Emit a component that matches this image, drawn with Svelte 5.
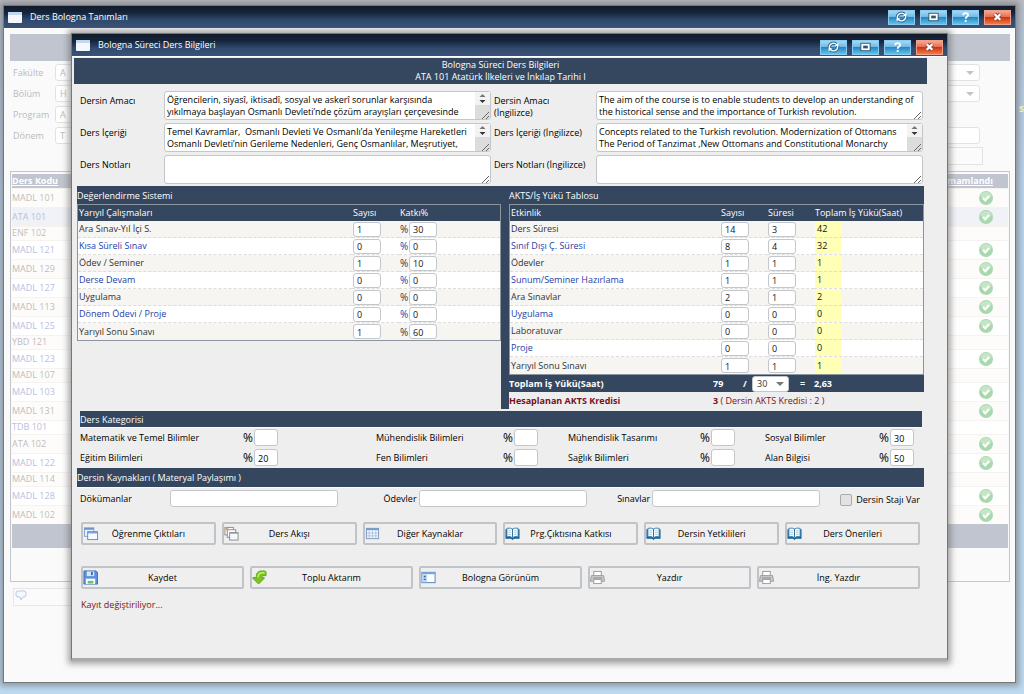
<script lang="ts">
	type Work = { name: string; count: number; duration: number };

	const windowTools = ['refresh', 'maximize', 'help', 'close'];

	const courses = [
		{ code: 'MADL 101', done: true },
		{ code: 'ATA 101', done: true },
		{ code: 'ENF 102', done: false },
		{ code: 'MADL 121', done: true },
		{ code: 'MADL 129', done: true },
		{ code: 'MADL 127', done: true },
		{ code: 'MADL 113', done: true },
		{ code: 'MADL 125', done: true },
		{ code: 'YBD 121', done: false },
		{ code: 'MADL 123', done: true },
		{ code: 'MADL 107', done: false },
		{ code: 'MADL 103', done: true },
		{ code: 'MADL 131', done: true },
		{ code: 'TDB 101', done: false },
		{ code: 'ATA 102', done: true },
		{ code: 'MADL 122', done: true },
		{ code: 'MADL 114', done: false },
		{ code: 'MADL 128', done: true },
		{ code: 'MADL 102', done: true }
	];

	const filters = [
		{ id: 'fakulte', label: 'Fakülte', value: 'A' },
		{ id: 'bolum', label: 'Bölüm', value: 'H' },
		{ id: 'program', label: 'Program', value: 'A' },
		{ id: 'donem', label: 'Dönem', value: 'T' }
	];

	let texts = $state([
		{
			id: 'amac',
			label: 'Dersin Amacı',
			scroll: true,
			value:
				'Öğrencilerin, siyasî, iktisadî, sosyal ve askerî sorunlar karşısında\nyıkılmaya başlayan Osmanlı Devleti’nde çözüm arayışları çerçevesinde'
		},
		{
			id: 'amac-en',
			label: 'Dersin Amacı\n(İngilizce)',
			scroll: false,
			value:
				'The aim of the course is to enable students to develop an understanding of\nthe historical sense and the importance of Turkish revolution.'
		},
		{
			id: 'icerik',
			label: 'Ders İçeriği',
			scroll: true,
			value:
				'Temel Kavramlar,  Osmanlı Devleti Ve Osmanlı’da Yenileşme Hareketleri\nOsmanlı Devleti’nin Gerileme Nedenleri, Genç Osmanlılar, Meşrutiyet,'
		},
		{
			id: 'icerik-en',
			label: 'Ders İçeriği (İngilizce)',
			scroll: true,
			value:
				'Concepts related to the Turkish revolution. Modernization of Ottomans\nThe Period of Tanzimat ,New Ottomans and Constitutional Monarchy'
		},
		{ id: 'notlar', label: 'Ders Notları', scroll: false, value: '' },
		{ id: 'notlar-en', label: 'Ders Notları (İngilizce)', scroll: false, value: '' }
	]);

	let grading = $state([
		{ name: 'Ara Sınav-Yıl İçi S.', count: 1, share: 30 },
		{ name: 'Kısa Süreli Sınav', count: 0, share: 0 },
		{ name: 'Ödev / Seminer', count: 1, share: 10 },
		{ name: 'Derse Devam', count: 0, share: 0 },
		{ name: 'Uygulama', count: 0, share: 0 },
		{ name: 'Dönem Ödevi / Proje', count: 0, share: 0 },
		{ name: 'Yarıyıl Sonu Sınavı', count: 1, share: 60 }
	]);

	let workload: Work[] = $state([
		{ name: 'Ders Süresi', count: 14, duration: 3 },
		{ name: 'Sınıf Dışı Ç. Süresi', count: 8, duration: 4 },
		{ name: 'Ödevler', count: 1, duration: 1 },
		{ name: 'Sunum/Seminer Hazırlama', count: 1, duration: 1 },
		{ name: 'Ara Sınavlar', count: 2, duration: 1 },
		{ name: 'Uygulama', count: 0, duration: 0 },
		{ name: 'Laboratuvar', count: 0, duration: 0 },
		{ name: 'Proje', count: 0, duration: 0 },
		{ name: 'Yarıyıl Sonu Sınavı', count: 1, duration: 1 }
	]);

	let hoursPerCredit = $state('30');
	const total = $derived(workload.reduce((sum, w) => sum + w.count * w.duration, 0));
	const ratio = $derived(total / Number(hoursPerCredit));

	let categories = $state([
		{ id: 'matematik', label: 'Matematik ve Temel Bilimler', value: '' },
		{ id: 'muhendislik', label: 'Mühendislik Bilimleri', value: '' },
		{ id: 'tasarim', label: 'Mühendislik Tasarımı', value: '' },
		{ id: 'sosyal', label: 'Sosyal Bilimler', value: '30' },
		{ id: 'egitim', label: 'Eğitim Bilimleri', value: '20' },
		{ id: 'fen', label: 'Fen Bilimleri', value: '' },
		{ id: 'saglik', label: 'Sağlık Bilimleri', value: '' },
		{ id: 'alan', label: 'Alan Bilgisi', value: '50' }
	]);

	const pages = [
		{ label: 'Öğrenme Çıktıları', icon: 'windows' },
		{ label: 'Ders Akışı', icon: 'cascade' },
		{ label: 'Diğer Kaynaklar', icon: 'grid' },
		{ label: 'Prg.Çıktısına Katkısı', icon: 'book' },
		{ label: 'Dersin Yetkilileri', icon: 'book' },
		{ label: 'Ders Önerileri', icon: 'book' }
	];

	const actions = [
		{ label: 'Kaydet', icon: 'save' },
		{ label: 'Toplu Aktarım', icon: 'transfer' },
		{ label: 'Bologna Görünüm', icon: 'view' },
		{ label: 'Yazdır', icon: 'print' },
		{ label: 'İng. Yazdır', icon: 'print' }
	];
</script>

{#snippet titlebar(title: string)}
	<header class="titlebar">
		<svg class="app-icon" viewBox="0 0 14 11" aria-hidden="true">
			<rect width="14" height="11" rx="1" fill="#f4f8fe" />
			<rect width="14" height="3" rx="1" fill="#c3d8f0" />
		</svg>
		<h1>{title}</h1>
		<div class="tools">
			{#each windowTools as tool}
				<button type="button" class="tool" class:close={tool === 'close'} aria-label={tool}>
					<svg viewBox="0 0 14 13" fill="none" stroke="#fff" stroke-width="2" aria-hidden="true">
						{#if tool === 'refresh'}
							<path d="M2.500 8V6.500a4.500 4.500 0 0 1 8-2.500M11.500 5v1.500a4.500 4.500 0 0 1-8 2.500" stroke="#31668c" stroke-width="3.600" />
							<path d="M2.500 8V6.500a4.500 4.500 0 0 1 8-2.500M11.500 5v1.500a4.500 4.500 0 0 1-8 2.500" stroke-width="1.500" />
							<path d="M12.300 1.500v4H8.500zM1.700 11.500v-4h3.800z" fill="#fff" stroke="none" />
						{:else if tool === 'maximize'}
							<rect x="3.500" y="4" width="7" height="5" stroke="#31566f" stroke-width="4" />
							<rect x="3.500" y="4" width="7" height="5" fill="#31566f" />
						{:else if tool === 'help'}
							<path d="M4.500 4.500C4.500 1.500 9.800 1.500 9.800 4.300c0 2-2.600 1.800-2.600 4M7.200 9.800v2" />
						{:else}
							<path d="M4 3.500l6 6M10 3.500l-6 6" stroke="#8c4434" stroke-width="4.500" />
							<path d="M4 3.500l6 6M10 3.500l-6 6" stroke-width="2.500" />
						{/if}
					</svg>
				</button>
			{/each}
		</div>
	</header>
{/snippet}

{#snippet icon(name: string)}
	<svg class="icon" viewBox="0 0 16 16" aria-hidden="true">
		{#if name === 'windows'}
			<rect x="1.500" y="2" width="10" height="9" fill="#e8f1fd" stroke="#7f9fd0" />
			<path d="M1.500 3h10" stroke="#6b93d0" stroke-width="2" />
			<rect x="5" y="6" width="10.500" height="8.500" fill="#f7fbff" stroke="#6688c0" />
			<path d="M5 7h10.500" stroke="#79a4e0" stroke-width="2" />
		{:else if name === 'cascade'}
			<rect x="1" y="1.500" width="9" height="8" fill="#fff" stroke="#888" />
			<rect x="3.500" y="4" width="9" height="8" fill="#fff" stroke="#888" />
			<rect x="6" y="7" width="9" height="8" fill="#f4f8ff" stroke="#888" />
			<path d="M6 8h9" stroke="#9bb5d8" />
			<path d="M1 1l4 1-3 3z" fill="#d0a060" />
		{:else if name === 'grid'}
			<rect x="1.500" y="2.500" width="13" height="11" fill="#f4f9ff" stroke="#7897bd" />
			<path d="M2 3.500h12" stroke="#6e9bd0" stroke-width="2" />
			<path d="M4.500 5v8M8 5v8M11.500 5v8M2 7.500h12M2 10.500h12" stroke="#adc3dd" />
		{:else if name === 'book'}
			<path d="M.5 3.500h15v10H9.500L8 14.800 6.500 13.500h-6z" fill="#155d92" />
			<path d="M2 2.500q4-1 6 .8 2-1.800 6-.8v9q-4-.8-6 1-2-1.800-6-1z" fill="#f5fbff" stroke="#3b7eae" />
			<path d="M8 3v9" stroke="#286996" />
			<path d="M3.500 5h3M3.500 7h3M3.500 9h3M9.500 5h3M9.500 7h3M9.500 9h3" stroke="#b4cddd" />
		{:else if name === 'save'}
			<path d="M1 1h13l1.500 1.500V15H1z" fill="#5b90dc" stroke="#3f69b5" />
			<rect x="4" y="1.500" width="8" height="5" fill="#d8e8fb" />
			<rect x="8.500" y="2" width="2" height="3.500" fill="#3f6db9" />
			<rect x="3" y="8.500" width="10" height="6.500" fill="#fff" />
			<path d="M3 9h10" stroke="#82a9df" />
			<path d="M5 13h6" stroke="#6bc46c" stroke-width="3" />
		{:else if name === 'transfer'}
			<path d="M4.500 7q0-5.500 5-6h4.500l1 1v4h-3.500q-1 0-1 2H13v1L7 15 1 9V8h3.500z" fill="#79c51e" stroke="#65a822" />
			<path d="M6.500 8q0-5 5-5h2" fill="none" stroke="#baf36a" stroke-width="1.500" />
		{:else if name === 'view'}
			<rect x="1" y="2.500" width="14" height="11" fill="#fff" stroke="#4e7eb9" />
			<path d="M1 3.500h14" stroke="#78a8e0" stroke-width="2" />
			<rect x="1.500" y="4.500" width="5" height="8.500" fill="#bdd8f5" />
			<path d="M3 7h2M3 10h2" stroke="#2d66ac" stroke-width="1.500" />
		{:else}
			<rect x="4" y="1.500" width="8" height="5" fill="#fff" stroke="#999" />
			<path d="M1.500 6h13l1 6H.5z" fill="#ccc" stroke="#999" />
			<rect x="4" y="10" width="8" height="4.500" fill="#fff" stroke="#999" />
			<path d="M3 8.500h10" stroke="#888" />
		{/if}
	</svg>
{/snippet}

<div class="desktop">
	<span class="behind">S</span>
	<section class="window">
		{@render titlebar('Ders Bologna Tanımları')}
		<div class="list-body">
			<div class="faded-band"></div>
			<div class="filters">
				{#each filters as f}
					<label for={f.id}>{f.label}</label>
					<div class="filter-box" class:drop={f.id === 'fakulte' || f.id === 'bolum'} class:short={f.id === 'program'}>
						<input id={f.id} value={f.value} />
					</div>
				{/each}
			</div>
			<div class="search-row"><button type="button" aria-label="Ara"></button></div>
			<div class="list-frame">
				<table class="courses">
					<thead>
						<tr><th><a href="#kod">Ders Kodu</a></th><th><a href="#tamam">Tamamlandı</a></th></tr>
					</thead>
					<tbody>
						{#each courses as course}
							<tr class:done={course.done} class:selected={course.code === 'ATA 101'}>
								<td>{course.code}</td>
								<td>
									{#if course.done}
										<svg class="check" viewBox="0 0 14 14" aria-hidden="true">
											<circle cx="7" cy="7" r="7" fill="#a9d8ae" />
											<ellipse cx="7" cy="4.500" rx="5.500" ry="3.500" fill="#c4e6c7" />
											<path d="M4 7l2.300 2.500L10 5" fill="none" stroke="#fff" stroke-width="2" />
										</svg>
									{/if}
								</td>
							</tr>
						{/each}
					</tbody>
				</table>
				<div class="list-foot"></div>
			</div>
			<button type="button" class="note" aria-label="Not">
				<svg viewBox="0 0 12 11" fill="#f5f9fd" stroke="#b7cbe3" aria-hidden="true">
					<path d="M3 1h6q2 0 2 2v2q0 2-2 2H8l-2 3-1-3H3Q1 7 1 5V3q0-2 2-2z" />
				</svg>
			</button>
		</div>
	</section>

	<section class="window dialog">
		{@render titlebar('Bologna Süreci Ders Bilgileri')}
		<form class="dialog-body" onsubmit={(e) => e.preventDefault()}>
			<h2 class="course-title">
				Bologna Süreci Ders Bilgileri<br />ATA 101 Atatürk İlkeleri ve İnkılap Tarihi I
			</h2>

			<div class="texts">
				{#each texts as t}
					<label for={t.id}>{t.label}</label>
					<div class="area">
						<textarea id={t.id} bind:value={t.value}></textarea>
						{#if t.scroll}
							<svg class="scroll" viewBox="0 0 15 27" aria-hidden="true">
								<rect width="15" height="13" fill="#f3f3f3" />
								<rect y="13" width="15" height="14" fill="#dcdcdc" />
								<path d="M4.500 5l3-3 3 3z" fill="#777" />
								<path d="M4.500 8l3 3 3-3z" fill="#333" />
							</svg>
						{/if}
						<svg class="grip" viewBox="0 0 8 8" stroke="#666" aria-hidden="true">
							<path d="M0 8l7-7M4 8l3-3" />
						</svg>
					</div>
				{/each}
			</div>

			<div class="panels">
				<div class="grading">
					<h3>Değerlendirme Sistemi</h3>
					<table class="data">
						<colgroup><col /><col class="c-count" /><col class="c-share" /></colgroup>
						<thead>
							<tr><th>Yarıyıl Çalışmaları</th><th>Sayısı</th><th>Katkı%</th></tr>
						</thead>
						<tbody>
							{#each grading as g}
								<tr>
									<td>{g.name}</td>
									<td><input aria-label="{g.name} sayısı" bind:value={g.count} /></td>
									<td>
										<div class="percent">
											<span>%</span><input aria-label="{g.name} katkı" bind:value={g.share} />
										</div>
									</td>
								</tr>
							{/each}
						</tbody>
					</table>
				</div>
				<div class="workload">
					<h3>AKTS/İş Yükü Tablosu</h3>
					<table class="data">
						<colgroup><col /><col class="c-count" /><col class="c-count" /><col class="c-total" /></colgroup>
						<thead>
							<tr><th>Etkinlik</th><th>Sayısı</th><th>Süresi</th><th>Toplam İş Yükü(Saat)</th></tr>
						</thead>
						<tbody>
							{#each workload as w}
								<tr>
									<td>{w.name}</td>
									<td><input aria-label="{w.name} sayısı" bind:value={w.count} /></td>
									<td><input aria-label="{w.name} süresi" bind:value={w.duration} /></td>
									<td><output>{w.count * w.duration}</output></td>
								</tr>
							{/each}
						</tbody>
					</table>
					<div class="sum">
						<span>Toplam İş Yükü(Saat)</span>
						<span>{total}</span>
						<span>/</span>
						<span class="hours">
							<select aria-label="Saat" bind:value={hoursPerCredit}>
								<option>25</option>
								<option>30</option>
							</select>
						</span>
						<span>=</span>
						<span>{ratio.toFixed(2).replace('.', ',')}</span>
					</div>
					<div class="credit">
						<b>Hesaplanan AKTS Kredisi</b>
						<span><b>{Math.round(ratio)}</b> ( Dersin AKTS Kredisi : 2 )</span>
					</div>
				</div>
			</div>

			<h3 class="band inset">Ders Kategorisi</h3>
			<div class="categories">
				{#each categories as c}
					<label for={c.id}>{c.label}</label>
					<div class="percent">
						<span>%</span><input id={c.id} bind:value={c.value} />
					</div>
				{/each}
			</div>

			<h3 class="band">Dersin Kaynakları ( Materyal Paylaşımı )</h3>
			<div class="resources">
				<label for="dokuman">Dökümanlar</label>
				<input id="dokuman" />
				<label class="end" for="odev">Ödevler</label>
				<input id="odev" />
				<label class="end" for="sinav">Sınavlar</label>
				<input id="sinav" />
				<label class="intern"><input type="checkbox" />Dersin Stajı Var</label>
			</div>

			<div class="buttons">
				{#each pages as p}
					<button type="button">{@render icon(p.icon)}<span>{p.label}</span></button>
				{/each}
			</div>
			<div class="buttons">
				{#each actions as a}
					<button type="button">{@render icon(a.icon)}<span>{a.label}</span></button>
				{/each}
			</div>
			<p class="status">Kayıt değiştiriliyor...</p>
		</form>
	</section>
</div>

<style>
	:global(body) {
		margin: 0;
		background: #bcd8ee;
	}

	.desktop {
		position: relative;
		overflow: hidden;
		padding: 5px 8px 11px 3px;
		background: linear-gradient(#b9bcc2, #b4c3d6 30px, #b9d3ed 180px, #bedaf0);
		font-family: Tahoma, "Open Sans", "Noto Sans", sans-serif;
		font-size: 9px;
		line-height: 12px;
		color: #000;
	}

	.desktop * {
		box-sizing: border-box;
	}

	/* sliver of the page behind the windows */
	.behind {
		position: absolute;
		top: 103px;
		right: 0;
		color: #f3f0b4;
		font-weight: 700;
	}

	input,
	textarea,
	select,
	button {
		font: inherit;
		color: inherit;
		margin: 0;
	}

	input,
	textarea,
	select {
		border: 1px solid #c3c7cb;
		border-radius: 3px;
		background: #fff;
		outline: none;
	}

	h1,
	h2,
	h3,
	p {
		margin: 0;
		font-size: 9px;
		font-weight: 400;
	}

	.window {
		border: 1px solid #777;
		background: #fafafa;
		box-shadow: 0 0 6px 3px rgba(110, 110, 110, 0.6);
	}

	.dialog {
		position: absolute;
		top: 33px;
		left: 71px;
		right: 76px;
		border-bottom: 3px solid #aaa;
		background: #eee;
	}

	.titlebar {
		display: flex;
		align-items: center;
		height: 23px;
		padding: 0 4px;
		border-bottom: 1px solid #fff;
		background: linear-gradient(#101b2b 0, #15243a 30%, #314a6e 65%, #3a5277);
		color: #fff;
	}

	.app-icon {
		width: 14px;
		height: 11px;
		margin-right: 8px;
	}

	.tools {
		display: flex;
		gap: 5px;
		margin-left: auto;
	}

	.dialog .tools {
		padding-top: 4px;
	}

	.tool {
		display: flex;
		justify-content: center;
		align-items: center;
		width: 27px;
		height: 15px;
		padding: 0;
		border: 1px solid #8ccaf0;
		background: linear-gradient(#a5d8f3 0, #6cb8e6 48%, #2a86c2 50%, #5cc4ec);
	}

	.tool.close {
		border-color: #f0a08a;
		background: linear-gradient(#f6a793 0, #e8694a 48%, #cc3512 50%, #f07c42);
	}

	.tool svg {
		width: 13px;
		height: 12px;
	}

	.list-body {
		padding: 5px 5px 76px 6px;
	}

	.faded-band {
		height: 27px;
		background: #c0c5cf;
	}

	.filters {
		display: grid;
		grid-template-columns: 42px 1fr;
		row-gap: 4px;
		padding: 3px 30px 0 3px;
		color: #bbb;
	}

	.filters label {
		line-height: 17px;
	}

	.filter-box {
		position: relative;
	}

	.filter-box.short {
		width: 50%;
	}

	.filter-box input {
		width: 100%;
		height: 17px;
		display: block;
		padding: 0 4px;
		border-color: #e2e2e2;
	}

	.filter-box.drop::after {
		content: '';
		position: absolute;
		right: 6px;
		top: 7px;
		border: 4px solid transparent;
		border-top-color: #c4c4c4;
	}

	.search-row {
		display: flex;
		justify-content: flex-end;
		padding: 3px 27px 6px;
	}

	.search-row button {
		width: 80px;
		height: 18px;
		border: 1px solid #e2e2e2;
		background: #fbfbfb;
	}

	.list-frame {
		padding: 2px 1px 33px;
		border: 1px solid #c3c6cb;
	}

	.courses {
		width: 100%;
		border-collapse: collapse;
	}

	.courses th {
		height: 14px;
		padding: 0;
		background: #c0c5cf;
		text-align: left;
	}

	.courses th a {
		color: #fff;
	}

	.courses td {
		height: 14px;
		padding: 0;
		line-height: 12px;
		background: #fdfcfa;
		border-top: 1px solid #f4f3f0;
		color: #bdbdbd;
	}

	.courses .done td {
		height: 19px;
	}

	.courses tr:nth-child(even) td {
		background: #fff;
		color: #b7c0e2;
	}

	.courses .selected td {
		background: #f0f2f7 !important;
	}

	.courses th:last-child,
	.courses td:last-child {
		padding-right: 15px;
		text-align: right;
	}

	.check {
		display: block;
		width: 14px;
		height: 14px;
		margin-left: auto;
	}

	.list-foot {
		height: 24px;
		background: #c0c5cf;
	}

	.note {
		display: block;
		width: 120px;
		height: 18px;
		margin: 6px 0 0 3px;
		padding: 1px;
		border: 1px solid #e6e6e6;
		background: #fbfbfb;
		text-align: left;
	}

	.note svg {
		width: 12px;
		height: 11px;
	}

	.dialog-body {
		padding: 1px 20px 43px 2px;
	}

	.course-title {
		padding: 1px 0;
		background: #35475f;
		color: #fff;
		text-align: center;
	}

	.texts {
		display: grid;
		grid-template-columns: 84px 1fr 105px 1fr;
		gap: 3px 0;
		padding: 7px 4px 2px 6px;
	}

	.texts label {
		padding: 4px 0 0;
		white-space: pre-line;
	}

	.texts label:nth-of-type(even) {
		padding-left: 3px;
	}

	.area {
		position: relative;
		height: 29px;
	}

	.area textarea {
		display: block;
		width: 100%;
		height: 29px;
		padding: 2px 2px 0;
		resize: none;
		overflow: hidden;
		white-space: pre;
	}

	.scroll {
		position: absolute;
		top: 1px;
		right: 1px;
		width: 15px;
		height: 27px;
	}

	.grip {
		position: absolute;
		right: 1px;
		bottom: 1px;
		width: 8px;
		height: 8px;
	}

	.panels {
		display: grid;
		grid-template-columns: 424fr 423fr;
		margin: 0 3px;
	}

	.grading h3,
	.workload h3 {
		height: 18px;
		line-height: 20px;
		background: #35475f;
		color: #fff;
	}

	.workload {
		border-left: 8px solid #35475f;
	}

	.data {
		width: 100%;
		table-layout: fixed;
		border-collapse: separate;
		border-spacing: 0;
		border: 1px solid #8b959f;
		background: #fff;
	}

	.c-count {
		width: 47px;
	}

	.c-share {
		width: 101px;
	}

	.c-total {
		width: 109px;
	}

	.data th {
		height: 16px;
		padding: 0 0 0 1px;
		background: #35475f;
		color: #fff;
		font-weight: 400;
		text-align: left;
		white-space: nowrap;
	}

	.data td {
		height: 17px;
		padding: 0 0 0 1px;
		border-bottom: 1px dashed #ddd;
		background: #f6f5f2;
		color: #333;
		white-space: nowrap;
	}

	.data tr:last-child td {
		border-bottom: 0;
	}

	.data tr:nth-child(even) td {
		background: #fff;
		color: #2340a8;
	}

	.data input {
		display: block;
		width: 28px;
		height: 15px;
		padding: 1px 3px 0;
		color: #111;
	}

	.percent {
		display: flex;
		align-items: center;
	}

	.percent span {
		width: 9px;
		font-size: 10px;
	}

	.data output {
		display: block;
		width: 26px;
		height: 16px;
		padding: 2px 0 0 2px;
		background: #ffffb5;
		color: #111;
	}

	.sum,
	.credit {
		display: grid;
		height: 17px;
		align-items: center;
	}

	.sum {
		grid-template-columns: 1fr 30px 9px 48px 14px 110px;
		background: #35475f;
		color: #fff;
		font-weight: 700;
	}

	.hours {
		position: relative;
	}

	.hours::after {
		content: '';
		position: absolute;
		right: 16px;
		top: 6px;
		border: 4px solid transparent;
		border-top-color: #777;
		pointer-events: none;
	}

	.sum select {
		display: block;
		width: 37px;
		height: 16px;
		padding: 0 4px;
		appearance: none;
		font-weight: 400;
		color: #333;
	}

	.credit {
		grid-template-columns: 1fr 211px;
		color: #7a1020;
	}

	.band {
		height: 19px;
		margin: 0 3px;
		background: #35475f;
		box-shadow: 0 1px #fafafa;
		color: #fff;
		line-height: 19px;
	}

	.band.inset {
		height: 16px;
		margin: 2px 5px 0 6px;
		line-height: 17px;
	}

	.categories {
		display: grid;
		grid-template-columns: 163fr 133fr 127fr 65fr 132fr 65fr 114fr 43fr;
		row-gap: 3px;
		align-items: center;
		padding: 2px 5px 2px 6px;
	}

	.categories label {
		white-space: nowrap;
	}

	.categories input {
		width: 24px;
		height: 17px;
		padding: 1px 3px 0;
	}

	.categories .percent span {
		width: 11px;
		font-size: 12px;
	}

	.resources {
		display: grid;
		grid-template-columns: 90fr 168fr 81fr 169fr 65fr 168fr 100fr;
		align-items: center;
		padding: 3px 7px 0 6px;
	}

	.resources input:not([type]) {
		width: 100%;
		height: 17px;
	}

	.end {
		padding-right: 2px;
		text-align: right;
	}

	.intern {
		display: flex;
		align-items: center;
		justify-content: flex-end;
		gap: 4px;
		padding-top: 2px;
		white-space: nowrap;
	}

	.intern input {
		appearance: none;
		width: 12px;
		height: 12px;
		border: 1px solid #aaa;
		border-radius: 2px;
		background: #e2e2e2;
	}

	.buttons {
		display: grid;
		grid-auto-flow: column;
		grid-auto-columns: 1fr;
		gap: 6px;
		padding: 15px 7px 6px;
	}

	.buttons button {
		display: flex;
		align-items: center;
		height: 23px;
		padding: 0;
		border: 2px solid #c0c4c8;
		border-radius: 2px;
		background: #efefef;
	}

	.buttons button span {
		flex: 1;
		padding-right: 15px;
		text-align: center;
		white-space: nowrap;
	}

	.icon {
		width: 15px;
		height: 15px;
	}

	.status {
		padding: 4px 7px;
		color: #7a1020;
	}
</style>
